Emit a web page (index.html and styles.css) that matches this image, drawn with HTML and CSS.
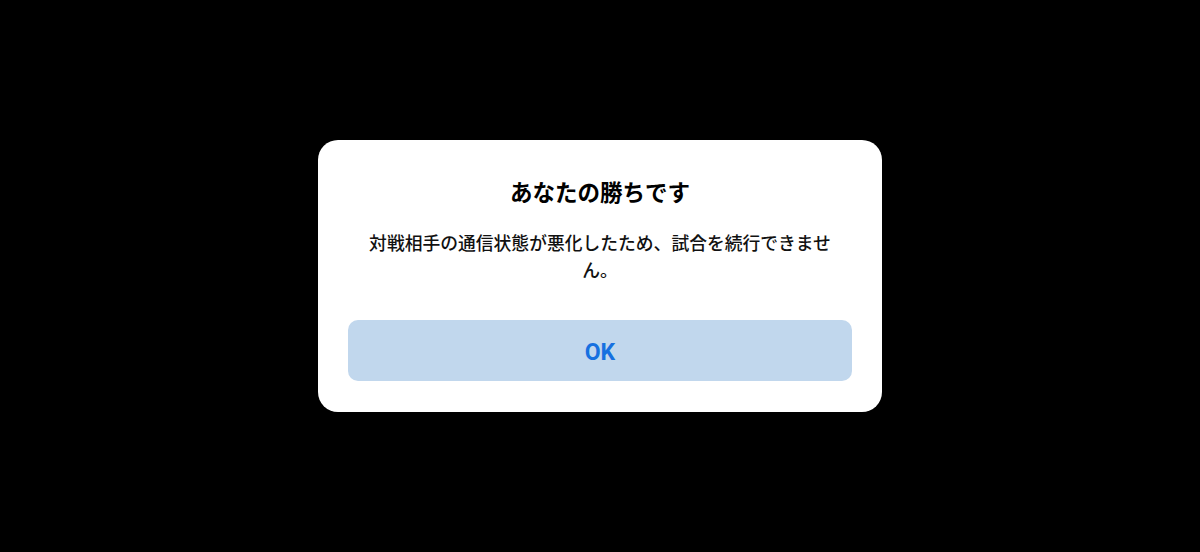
FILE: index.html
```html
<!DOCTYPE html>
<html lang="ja">
<head>
<meta charset="utf-8">
<link rel="stylesheet" href="styles.css">
</head>
<body>
<div class="screen">
  <div class="dialog">
    <h1 class="title">あなたの勝ちです</h1>
    <p class="message">対戦相手の通信状態が悪化したため、試合を続行できません。</p>
    <button class="ok">OK</button>
  </div>
</div>
</body>
</html>
```
FILE: styles.css
```css
html, body {
  margin: 0;
  padding: 0;
  background: #000;
}
.screen {
  width: 1200px;
  height: 552px;
  display: flex;
  align-items: center;
  justify-content: center;
}
.dialog {
  width: 564px;
  height: 272px;
  box-sizing: border-box;
  background: #fff;
  border-radius: 20px;
  padding: 36px 30px 31px;
  display: flex;
  flex-direction: column;
  align-items: center;
  font-family: "Noto Sans CJK JP", "Noto Sans", sans-serif;
  color: #000;
}
.title {
  margin: 0;
  font-size: 22.5px;
  line-height: 31px;
  font-weight: 700;
}
.message {
  margin: 22px 0 0;
  width: 476px;
  font-size: 17.8px;
  line-height: 27px;
  font-weight: 500;
  text-align: center;
  color: #111;
}
.ok {
  margin-top: auto;
  width: 504px;
  height: 61px;
  border: 0;
  border-radius: 10px;
  background: #c1d7ed;
  color: #1670e0;
  font-family: Roboto, "Liberation Sans", sans-serif;
  font-weight: 700;
  font-size: 23px;
  padding: 4px 0 0;
}
```
